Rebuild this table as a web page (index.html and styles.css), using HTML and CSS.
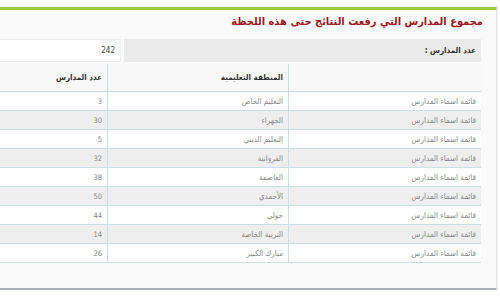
FILE: index.html
```
<!DOCTYPE html>
<html dir="rtl" lang="ar">
<head>
<meta charset="utf-8">
<link rel="stylesheet" href="styles.css">
</head>
<body>
<div class="panel">
  <h2 class="title">مجموع المدارس التي رفعت النتائج حتى هذه اللحظة</h2>
  <div class="count-row">
    <div class="count-label">عدد المدارس :</div>
    <div class="count-value">242</div>
  </div>
  <table class="grid">
    <thead>
      <tr><th class="c1"></th><th class="c2">المنطقة التعليمية</th><th class="c3">عدد المدارس</th></tr>
    </thead>
    <tbody>
      <tr><td>قائمة اسماء المدارس</td><td>التعليم الخاص</td><td>3</td></tr>
      <tr><td>قائمة اسماء المدارس</td><td>الجهراء</td><td>30</td></tr>
      <tr><td>قائمة اسماء المدارس</td><td>التعليم الديني</td><td>5</td></tr>
      <tr><td>قائمة اسماء المدارس</td><td>الفروانية</td><td>32</td></tr>
      <tr><td>قائمة اسماء المدارس</td><td>العاصمة</td><td>38</td></tr>
      <tr><td>قائمة اسماء المدارس</td><td>الأحمدي</td><td>50</td></tr>
      <tr><td>قائمة اسماء المدارس</td><td>حولي</td><td>44</td></tr>
      <tr><td>قائمة اسماء المدارس</td><td>التربية الخاصة</td><td>14</td></tr>
      <tr><td>قائمة اسماء المدارس</td><td>مبارك الكبير</td><td>26</td></tr>
    </tbody>
  </table>
</div>
</body>
</html>
```
FILE: styles.css
```
html {
  overflow: hidden;
  background: #ffffff;
}
body {
  margin: 0;
  font-family: "DejaVu Sans Condensed", "DejaVu Sans", sans-serif;
}
.panel {
  width: 719px;
  margin: 7px 3px 0 0;
  padding: 0 15px 25px 15px;
  background: #fafafa;
  border-top: 3px solid #9bcc45;
  border-right: 1px solid #e2e2e2;
  border-bottom: 2px solid #a9b3b8;
  box-shadow: 0 1px 2px rgba(0,0,0,0.08);
}
.title {
  margin: 0 -2px 0 0;
  height: 29px;
  line-height: 23px;
  font-size: 11px;
  font-weight: bold;
  color: #9c1c20;
}
.count-row {
  display: flex;
  gap: 3px;
  height: 23px;
  margin-bottom: 2px;
}
.count-label,
.count-value {
  flex: 1;
  font-size: 8px;
  line-height: 23px;
  padding: 0 5px;
}
.count-label {
  background: #ebebeb;
  color: #333;
  font-weight: bold;
}
.count-value {
  background: #ffffff;
  border: 1px solid #eeeeee;
  line-height: 21px;
  color: #444;
}
.grid {
  width: 719px;
  border-collapse: collapse;
  font-size: 8px;
}
.grid th {
  height: 27px;
  background: #f8f8f8;
  color: #333;
  font-weight: bold;
  text-align: right;
  padding: 0 5px;
  border-left: 1px solid #c9e0e3;
  border-bottom: 1px solid #c9e0e3;
}
.grid .c1 { width: 182px; }
.grid .c2 { width: 170px; }
.grid td {
  height: 18px;
  padding: 0 5px;
  color: #888;
  text-align: right;
  border-left: 1px solid #c9e0e3;
  border-bottom: 1px solid #c9e0e3;
}
.grid tbody tr:nth-child(odd) td { background: #ffffff; }
.grid tbody tr:nth-child(even) td { background: #eeeeee; }
.grid td:last-child { color: #888; font-size: 7.5px; }
```
